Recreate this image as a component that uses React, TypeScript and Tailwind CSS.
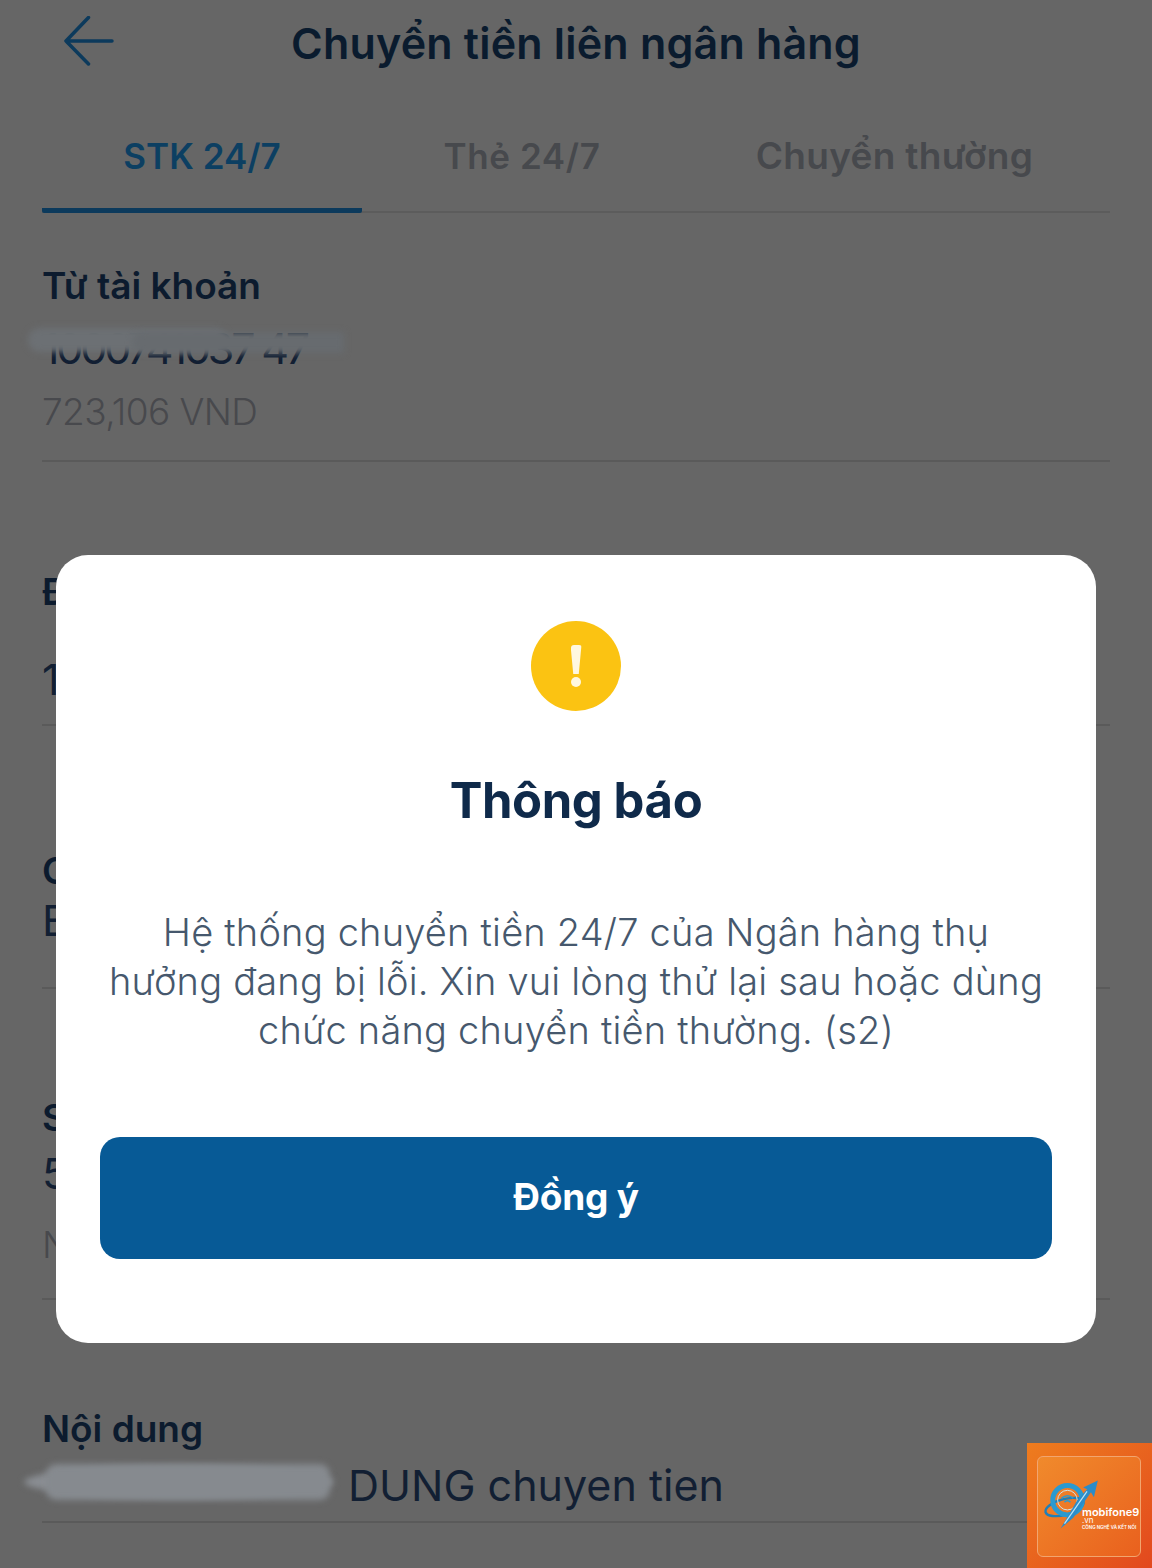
const font = { fontFamily: '"Inter", "Noto Sans", sans-serif' };

function Label({ children, className = "" }: { children: React.ReactNode; className?: string }) {
  return <div className={`text-[37px] leading-[44px] font-semibold text-[#0c1b2e] ${className}`}>{children}</div>;
}
function Value({ children, className = "" }: { children: React.ReactNode; className?: string }) {
  return <div className={`text-[43px] leading-[50px] font-normal text-[#121f33] ${className}`}>{children}</div>;
}
function Line({ className = "" }: { className?: string }) {
  return <div className={`h-[2px] bg-[#5a5a5a] ${className}`} />;
}

function Watermark() {
  return (
    <div className="absolute left-[1027px] top-[1443px] w-[125px] h-[125px] bg-gradient-to-br from-[#ee7c1e] to-[#e2481e] flex items-center justify-center">
      <div className="w-[104px] h-[101px] mt-[1px] ml-[-1px] rounded-[6px] border border-[#f2a56f] bg-gradient-to-br from-[#f08a2c] to-[#e9601e] relative overflow-hidden">
        <svg viewBox="0 0 104 101" className="absolute inset-0 w-full h-full">
          <ellipse cx="27" cy="51" rx="20" ry="8" fill="none" stroke="#1f7fb8" strokeWidth="2.500" transform="rotate(-15 27 51)" />
          <circle cx="30" cy="44" r="15" fill="none" stroke="#2a9ad0" strokeWidth="5" />
          <circle cx="30" cy="44" r="10" fill="none" stroke="#cfe6ee" strokeWidth="1" />
          <path d="M24 42q6-5 12 0M27 46q3-2.500 6 0" fill="none" stroke="#2a9ad0" strokeWidth="1.500" />
          <path d="M23 73 L40 44 L50 33 L46 31 L61 24 L57 41 L54 36 L36 62 Z" fill="#2c8cc8" />
          <path d="M27 68 L50 35" stroke="#bfe4f5" strokeWidth="1.200" />
        </svg>
        <div className="absolute left-[44px] top-[51px] text-[11px] leading-[8px] font-semibold text-white whitespace-nowrap">mobifone9</div>
        <div className="absolute left-[44px] top-[60px] text-[8px] leading-[7px] text-white">.vn</div>
        <div className="absolute left-[44px] top-[68px] text-[4.500px] leading-[6px] font-semibold text-white whitespace-nowrap">CÔNG NGHỆ VÀ KẾT NỐI</div>
      </div>
    </div>
  );
}

export default function App() {
  return (
    <div style={font} className="relative w-[1152px] h-[1568px] overflow-hidden bg-[#666666]">
      {/* Header */}
      <div className="relative h-[88px] flex items-center justify-center pb-[2px]">
        <svg viewBox="0 0 50 50" className="absolute left-[64px] top-[16px] w-[50px] h-[50px]" fill="none" stroke="#0c3a5c" strokeWidth="3.500" strokeLinecap="round" strokeLinejoin="round">
          <path d="M24.500 1.500 L2 25 L24.500 48 M2 25 H48" />
        </svg>
        <h1 className="text-[43px] leading-[50px] font-semibold tracking-[0.2px] text-[#0a1b2e]">Chuyển tiền liên ngân hàng</h1>
      </div>

      {/* Tabs */}
      <div className="ml-[42px] mt-[41px] flex h-[84px] border-b-2 border-[#5c5c5c] w-[1068px]">
        <div className="w-[320px] h-[84px] border-b-[5px] border-[#0c3a5c] rounded-b-[2px] flex justify-center pt-[2px] text-[35px] leading-[50px] font-semibold text-[#0c3f62]">STK 24/7</div>
        <div className="w-[320px] flex justify-center pt-[2px] text-[35px] leading-[50px] font-semibold tracking-[0.6px] text-[#47494d]">Thẻ 24/7</div>
        <div className="flex-1 flex justify-center pt-[2px] pr-[3px] text-[37px] leading-[50px] font-semibold tracking-[0.3px] text-[#47494d]">Chuyển thường</div>
      </div>

      {/* Form */}
      <div className="pl-[42px] pr-[42px] w-[1152px]">
        <Label className="mt-[51px]">Từ tài khoản</Label>
        <div className="relative mt-[15px]">
          <Value className="tracking-[-3.200px]">1000741037 47</Value>
          <div className="absolute left-[-14px] top-[5px] w-[200px] h-[24px] rounded-full bg-[#6c7074] blur-[3px]" />
          <div className="absolute left-[90px] top-[9px] w-[212px] h-[21px] rounded-l-full rounded-r-[50%] bg-[#676b6f] blur-[3px]" />
        </div>
        <div className="mt-[14px] text-[37px] leading-[50px] font-light tracking-[-0.6px] text-[#48494d]">723,106 VND</div>
        <Line className="mt-[23px]" />

        <Label className="mt-[108px]">Đến tài khoản</Label>
        <Value className="mt-[40px]">1023456789</Value>
        <Line className="mt-[20px]" />

        <Label className="mt-[123px]">Chọn ngân hàng</Label>
        <Value className="mt-[2px]">Eximbank</Value>
        <Line className="mt-[42px]" />

        <Label className="mt-[107px]">Số tiền</Label>
        <Value className="mt-[8px]">500,000</Value>
        <div className="mt-[22px] text-[37px] leading-[50px] font-light text-[#48494d]">Năm trăm nghìn đồng</div>
        <Line className="mt-[28px]" />

        <Label className="mt-[107px]">Nội dung</Label>
        <div className="relative mt-[9px] flex">
          <div className="w-[306px] shrink-0" />
          <Value>DUNG chuyen tien</Value>
          <div className="absolute left-[-18px] top-[6px] w-[310px] h-[32px] rounded-[50%] bg-[#8a8e93] blur-[3px]" />
          <div className="absolute left-[4px] top-[4px] w-[284px] h-[36px] rounded-[10px] bg-[#868a8f] blur-[3px]" />
        </div>
        <Line className="mt-[11px]" />
      </div>

      {/* Dialog */}
      <div className="absolute left-[56px] top-[555px] w-[1040px] h-[788px] rounded-[32px] bg-white px-[44px] pt-[66px] flex flex-col items-center">
        <div className="w-[90px] h-[90px] rounded-full bg-[#fbc312] flex flex-col items-center pt-[24px]">
          <div className="w-[11px] h-[29px] bg-[#fff8e0] [clip-path:polygon(0_0,100%_0,75%_100%,25%_100%)] rounded-t-[3px]" />
          <div className="w-[10px] h-[10px] rounded-full bg-[#fff8e0] mt-[3px]" />
        </div>
        <h2 className="mt-[62px] text-[49px] leading-[56px] font-bold tracking-[-0.4px] text-[#0f2a4a]">Thông báo</h2>
        <p className="mt-[79px] text-center text-[38px] leading-[49px] font-light tracking-[0.2px] text-[#46586d] w-[960px]">
          Hệ thống chuyển tiền 24/7 của Ngân hàng thụ
          <br />
          hưởng đang bị lỗi. Xin vui lòng thử lại sau hoặc dùng
          <br />
          chức năng chuyển tiền thường. (s2)
        </p>
        <button className="mt-[82px] w-[952px] h-[122px] shrink-0 rounded-[20px] bg-[#075a96] text-white text-[37px] font-bold tracking-[-0.2px] flex items-center justify-center pb-[3px]">
          Đồng ý
        </button>
      </div>

      <Watermark />
    </div>
  );
}
